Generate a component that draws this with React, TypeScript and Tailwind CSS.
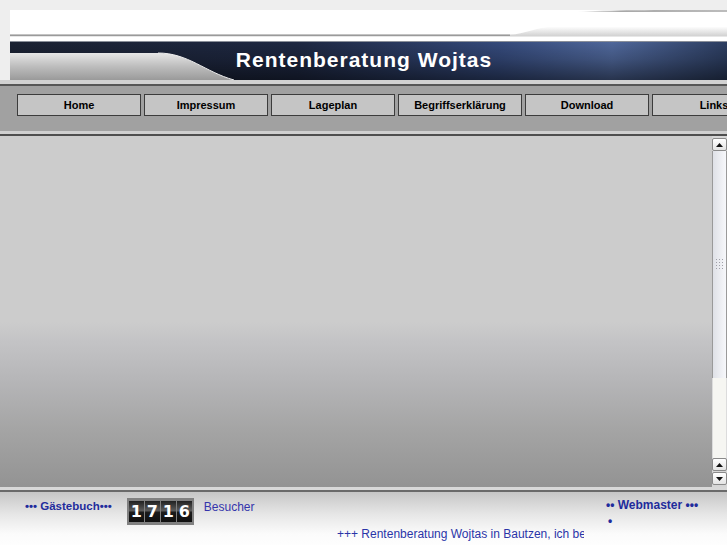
import React from 'react';

const navItems = ['Home', 'Impressum', 'Lageplan', 'Begriffserklärung', 'Download', 'Links'];

// banner picture behind the site title
const BannerArt: React.FC = () => (
    <svg className="absolute inset-0" width="717" height="70" viewBox="0 0 717 70" preserveAspectRatio="none">
        <defs>
            <linearGradient id="band" x1="0" y1="0" x2="1" y2="0">
                <stop offset="0" stopColor="#1b2233" />
                <stop offset="0.4" stopColor="#1e2842" />
                <stop offset="0.68" stopColor="#34497a" />
                <stop offset="0.84" stopColor="#4f679a" />
                <stop offset="1" stopColor="#2c3d60" />
            </linearGradient>
            <linearGradient id="shade" x1="0" y1="0" x2="0" y2="1">
                <stop offset="0" stopColor="#000" stopOpacity="0" />
                <stop offset="0.45" stopColor="#000" stopOpacity="0.18" />
                <stop offset="1" stopColor="#000" stopOpacity="0.5" />
            </linearGradient>
            <linearGradient id="silver" x1="0" y1="0" x2="0" y2="1">
                <stop offset="0" stopColor="#e6e6e6" />
                <stop offset="0.5" stopColor="#bdbdbd" />
                <stop offset="1" stopColor="#9a9a9a" />
            </linearGradient>
            <linearGradient id="sweep" x1="0" y1="0" x2="0" y2="1">
                <stop offset="0" stopColor="#ffffff" />
                <stop offset="1" stopColor="#cfcfcf" />
            </linearGradient>
            <linearGradient id="topline" x1="0" y1="0" x2="1" y2="0">
                <stop offset="0" stopColor="#ffffff" />
                <stop offset="0.3" stopColor="#a8a8a8" />
                <stop offset="1" stopColor="#bcbcbc" />
            </linearGradient>
        </defs>
        <rect x="0" y="0" width="717" height="32" fill="#ffffff" />
        <path d="M565 2 C 600 0, 640 0, 717 0 L717 2 Z" fill="url(#topline)" />
        <path d="M0 24.5 L500 24.5 C 515 24.5, 525 17, 545 16.5 L717 16.5 L717 26.5 L0 26.5 Z" fill="url(#sweep)" />
        <rect x="0" y="24.5" width="500" height="1.5" fill="#9a9a9a" />
        <rect x="0" y="31" width="717" height="1" fill="#8a8f99" />
        <rect x="0" y="32" width="717" height="38" fill="url(#band)" />
        <rect x="0" y="32" width="717" height="38" fill="url(#shade)" />
        <path d="M0 43 L148 43 C 178 43, 195 62, 224 70 L0 70 Z" fill="url(#silver)" />
        <path d="M148 43 C 178 43, 195 62, 224 70" fill="none" stroke="#eeeeee" strokeWidth="1" />
    </svg>
);

const ScrollButton: React.FC<{ down?: boolean }> = ({ down }) => (
    <div className="h-[13px] border border-[#8a8a8a] rounded-[2px] bg-gradient-to-b from-[#ffffff] to-[#e4e4e4] flex items-center justify-center">
        <svg width="7" height="4" viewBox="0 0 7 4">
            {down ? <path d="M0 0 L7 0 L3.5 4 Z" fill="#111" /> : <path d="M0 4 L7 4 L3.5 0 Z" fill="#111" />}
        </svg>
    </div>
);

const Scrollbar: React.FC = () => (
    <div className="w-[15px] flex flex-col bg-[#d6d6d6]">
        <div className="h-[2px]" />
        <ScrollButton />
        <div className="h-[227px] border-x border-[#9a9a9a] bg-gradient-to-r from-[#dfe1e7] to-[#f7f8fb] flex items-center justify-center">
            <div className="grid grid-cols-3 gap-[2px] mt-[-2px]">
                {Array.from({ length: 12 }, (_, i) => (
                    <div key={i} className="w-[1px] h-[1px] bg-[#a0a0a8]" />
                ))}
            </div>
        </div>
        <div className="h-[80px] bg-[#f6f6f2] border-x border-[#dcdcdc]" />
        <ScrollButton />
        <div className="h-[1px]" />
        <ScrollButton down />
        <div className="h-[2px]" />
    </div>
);

const Counter: React.FC = () => (
    <div className="flex gap-[1px] bg-[#808080] px-[2px] py-[3px] h-[27px]">
        {['1', '7', '1', '6'].map((d, i) => (
            <div
                key={i}
                className="w-[15px] h-[21px] bg-[linear-gradient(180deg,#202020_0%,#5a5a5a_45%,#1a1a1a_55%,#101010_100%)] flex items-center justify-center text-white font-bold text-[16px] leading-none font-['DejaVu_Sans',sans-serif]"
            >
                {d}
            </div>
        ))}
    </div>
);

const App: React.FC = () => {
    return (
        <div className="w-[727px] min-h-screen overflow-hidden bg-white font-['Liberation_Sans',Arial,sans-serif]">
            {/* header */}
            <div className="bg-[#eeeeee] pt-[10px] pl-[10px]">
                <div className="relative h-[70px]">
                    <BannerArt />
                    <div className="relative h-full flex items-end justify-center pr-[9px] pb-[9px]">
                        <h1 className="text-white font-bold text-[21px] leading-[22px] tracking-[1px]">
                            Rentenberatung Wojtas
                        </h1>
                    </div>
                </div>
            </div>
            <div className="h-[4px] bg-[#d2d2d2]" />
            <div className="h-[2px] bg-[#575757]" />

            {/* navigation */}
            <div className="h-[45px] bg-[#a1a1a1] flex gap-[3px] pl-[17px] pt-[8px] whitespace-nowrap">
                {navItems.map((item) => (
                    <div
                        key={item}
                        className="shrink-0 w-[124px] h-[22px] border border-[#3c3c3c] bg-[#c5c5c5] flex items-center justify-center text-[11px] font-bold text-black"
                    >
                        {item}
                    </div>
                ))}
            </div>
            <div className="h-[3px] bg-[#cfcfcf]" />
            <div className="h-[2px] bg-[#4e4e4e]" />

            {/* content */}
            <div className="h-[351px] flex">
                <div className="flex-1 bg-[linear-gradient(180deg,#cccccc_0%,#cccccc_53%,#c4c4c6_58%,#b5b5b7_70%,#a4a4a4_84%,#939393_100%)]" />
                <Scrollbar />
            </div>
            <div className="h-[3px] bg-[#d8d8d8]" />
            <div className="h-[2px] bg-[#6a6a6a]" />

            {/* footer */}
            <div className="min-h-[60px] bg-[linear-gradient(180deg,#c6c6c6_0px,#e6e6e6_22px,#fbfbfb_42px,#ffffff_60px)] pt-[6px]">
                <div className="flex">
                    <div className="w-[606px] flex items-start">
                        <span className="ml-[25px] text-[11.5px] leading-[16px] font-bold text-[#1f2c9c]">••• Gästebuch•••</span>
                        <div className="ml-[15px]">
                            <Counter />
                        </div>
                        <span className="ml-[10px] mt-[1px] text-[12px] leading-[16px] text-[#3434ac]">Besucher</span>
                    </div>
                    <div className="flex flex-col text-[#1f2c9c] font-bold text-[12px] leading-[15px]">
                        <span>•• Webmaster •••</span>
                        <span className="ml-[2px] mt-[3px] leading-[11px]">•</span>
                    </div>
                </div>
                <div className="pl-[337px]">
                    <div className="w-[247px] overflow-hidden whitespace-nowrap text-[12px] leading-[14px] text-[#2a35a8]">
                        +++ Rentenberatung Wojtas in Bautzen, ich berate Sie gern in allen Fragen der Rente +++
                    </div>
                </div>
            </div>
        </div>
    );
};

export default App;
